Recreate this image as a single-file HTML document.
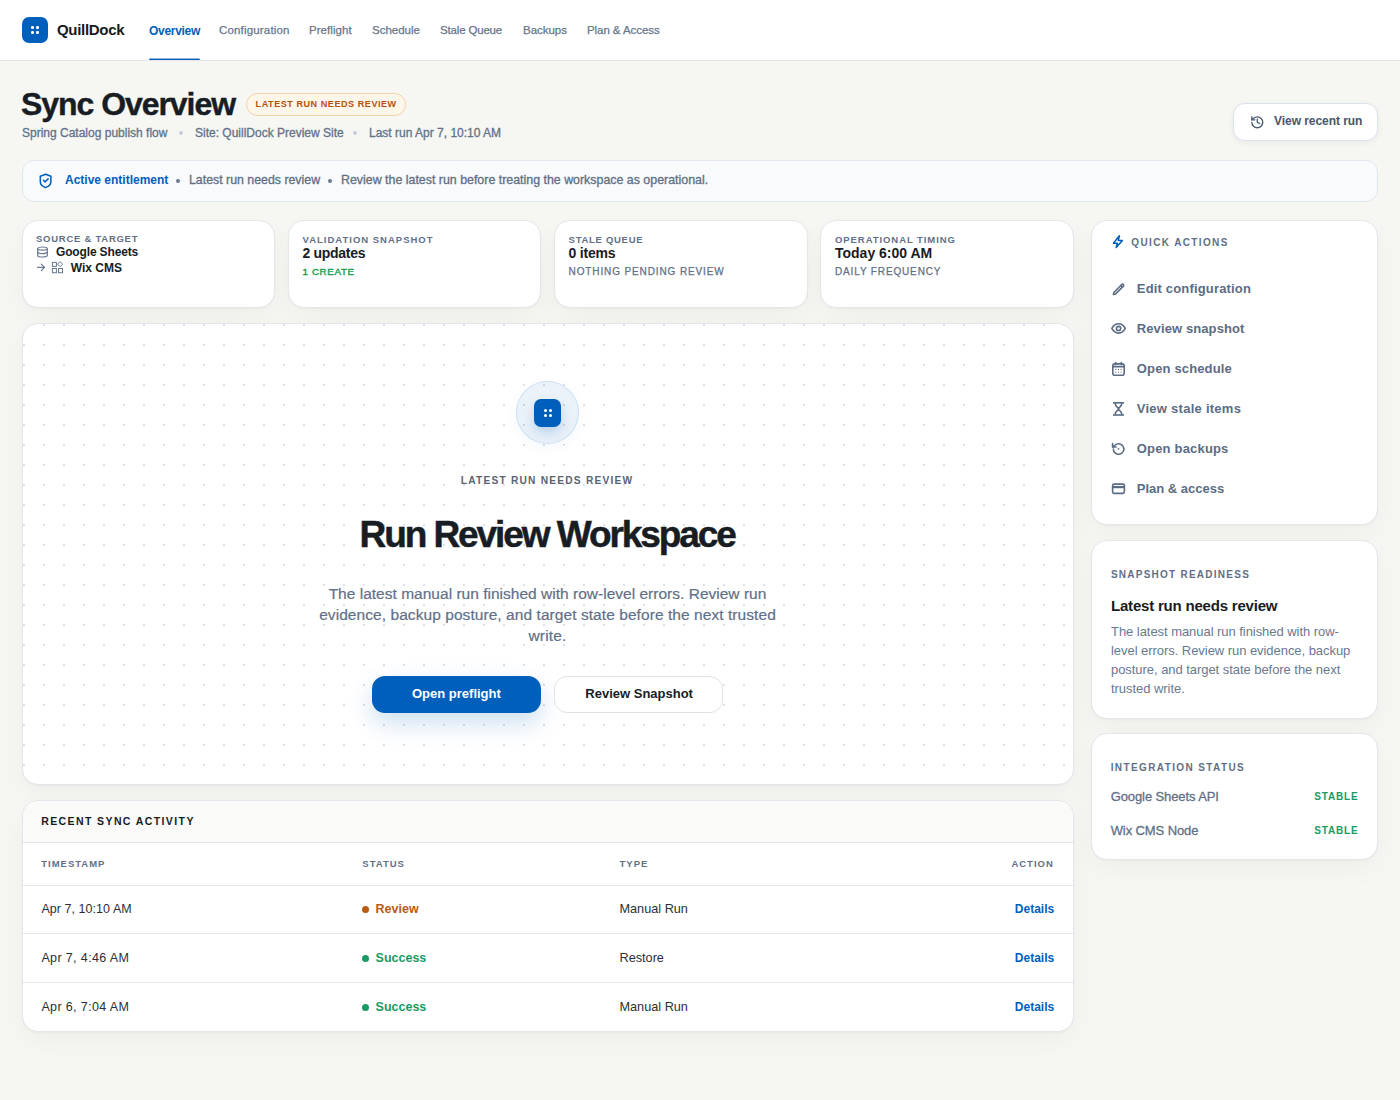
<!DOCTYPE html>
<html><head><meta charset="utf-8">
<style>
*{box-sizing:border-box;margin:0;padding:0}
html,body{width:1400px;height:1100px;overflow:hidden}
body{background:#f6f7f2;font-family:"Liberation Sans",sans-serif;color:#1b1f26;position:relative}
.abs{position:absolute}
.nowrap{white-space:nowrap}
svg{display:block}
/* header */
#hdr{position:absolute;left:0;top:0;width:1400px;height:61px;background:#fff;border-bottom:1px solid #e2e5ea}
#logo{position:absolute;left:22px;top:17px;width:26px;height:26px;border-radius:7px;background:#005fbb}
.dot{position:absolute;width:3px;height:3px;border-radius:1.3px;background:#fff}
#brand{position:absolute;left:57px;top:20.8px;font-size:15px;font-weight:700;letter-spacing:-0.3px;line-height:18px;color:#161a21}
.nav{position:absolute;top:22.7px;font-size:11.5px;line-height:15px;color:#66768c;-webkit-text-stroke:0.25px currentColor;white-space:nowrap}
.nav.act{color:#005fbb;font-weight:700;-webkit-text-stroke:0;letter-spacing:-0.35px}
#uline{position:absolute;left:149px;top:58px;width:51px;height:2px;border-radius:1px;background:linear-gradient(to bottom,rgba(0,95,187,.45) 0,rgba(0,95,187,.45) 50%,#005fbb 50%)}

.card{position:absolute;background:#fff;border:1px solid #e4e6eb;border-radius:16px;box-shadow:0 1px 2px rgba(20,25,35,.035),0 10px 28px rgba(20,25,35,.035)}
.t{position:absolute;white-space:nowrap}
.med{-webkit-text-stroke:0.3px currentColor}
.hero{background-color:#fff;background-image:radial-gradient(circle at 1px 1px,#dfe2e8 1px,transparent 1.2px);background-size:20px 20px;background-position:0 0}
.lbl{font-weight:700;color:#66778f;text-transform:uppercase;white-space:nowrap}
</style></head>
<body>
<div id="hdr">
  <div id="logo">
    <div class="dot" style="left:8.5px;top:8.5px"></div>
    <div class="dot" style="left:14px;top:8.5px"></div>
    <div class="dot" style="left:8.5px;top:14px"></div>
    <div class="dot" style="left:14px;top:14px"></div>
  </div>
  <div id="brand">QuillDock</div>
  <div class="nav act" style="left:149px;font-size:12px;top:23.6px;letter-spacing:-0.3px">Overview</div>
  <div class="nav" style="left:219px;letter-spacing:0.17px">Configuration</div>
  <div class="nav" style="left:309px;letter-spacing:0.05px">Preflight</div>
  <div class="nav" style="left:372px;letter-spacing:0.0px">Schedule</div>
  <div class="nav" style="left:440px;letter-spacing:-0.17px">Stale Queue</div>
  <div class="nav" style="left:523px;letter-spacing:-0.02px">Backups</div>
  <div class="nav" style="left:587px;letter-spacing:-0.07px">Plan &amp; Access</div>
  <div id="uline"></div>
</div>


<!-- page title -->
<div class="abs nowrap" id="title" style="left:21px;top:85px;font-size:32px;line-height:38px;font-weight:700;letter-spacing:-1.05px;color:#181c23;-webkit-text-stroke:0.4px currentColor">Sync Overview</div>
<div class="abs" id="badge" style="left:246px;top:93px;width:160px;height:23px;border-radius:12px;background:#fff6ea;border:1px solid #f1d3a8"></div>
<div class="abs nowrap" style="left:255.6px;top:98.3px;font-size:9.1px;line-height:12px;font-weight:700;letter-spacing:0.52px;color:#b4520c">LATEST RUN NEEDS REVIEW</div>
<div class="abs nowrap med" id="sub" style="left:22px;top:126px;font-size:12px;line-height:14px;color:#62728a">
  <span>Spring Catalog publish flow</span>
</div>
<div class="abs nowrap med" style="left:195px;top:126px;font-size:12px;line-height:14px;color:#62728a">Site: QuillDock Preview Site</div>
<div class="abs nowrap med" style="left:369px;top:126px;font-size:12px;line-height:14px;color:#62728a">Last run Apr 7, 10:10 AM</div>
<div class="abs" style="left:179px;top:131px;width:4px;height:4px;border-radius:2px;background:#c7ced8"></div>
<div class="abs" style="left:352.5px;top:131px;width:4px;height:4px;border-radius:2px;background:#c7ced8"></div>

<!-- view recent run -->
<div class="abs" style="left:1233px;top:103px;width:145px;height:38px;border-radius:12px;background:#fff;border:1px solid #dae2ec;box-shadow:0 2px 6px rgba(30,40,60,.06)"></div>
<svg class="abs" style="left:1249.9px;top:114.5px" width="14.6" height="14.6" viewBox="0 0 24 24" fill="none" stroke="#4a5a70" stroke-width="2.2" stroke-linecap="round" stroke-linejoin="round"><path d="M3 12a9 9 0 1 0 9-9 9.75 9.75 0 0 0-6.74 2.74L3 8"/><path d="M3 3v5h5"/><path d="M12 7v5l4 2"/></svg>
<div class="abs nowrap" style="left:1274px;top:114px;font-size:12px;line-height:14px;font-weight:700;color:#46566c;letter-spacing:-0.05px">View recent run</div>

<!-- banner -->
<div class="abs" style="left:22px;top:160px;width:1356px;height:42px;border-radius:12px;background:#f8fafc;border:1px solid #e1e7ef"></div>
<svg class="abs" style="left:39px;top:173px" width="13" height="16" viewBox="0 0 13 16" fill="none" stroke="#005fbb" stroke-width="1.5" stroke-linecap="round" stroke-linejoin="round"><path d="M6.6 1.2L11.9 3.3V8.5C11.9 11.5 9.5 13.6 6.6 14.5C3.7 13.6 1.3 11.5 1.3 8.5V3.3Z"/><path d="M4.5 7.3L6.1 8.9L9.2 5.8"/></svg>
<div class="abs nowrap" style="left:65px;top:173px;font-size:12px;line-height:14px;font-weight:700;color:#005fbb">Active entitlement</div>
<div class="abs" style="left:176px;top:179px;width:4px;height:4px;border-radius:2px;background:#6b7a8f"></div>
<div class="abs nowrap med" style="left:189px;top:173px;font-size:12.35px;line-height:14px;color:#5f6f85">Latest run needs review</div>
<div class="abs" style="left:328px;top:179px;width:4px;height:4px;border-radius:2px;background:#6b7a8f"></div>
<div class="abs nowrap med" style="left:341px;top:173px;font-size:12.4px;line-height:14px;color:#5f6f85">Review the latest run before treating the workspace as operational.</div>
<div class="card" style="left:22px;top:220px;width:253px;height:88px"></div>
<div class="card" style="left:288px;top:220px;width:253px;height:88px"></div>
<div class="card" style="left:554px;top:220px;width:254px;height:88px"></div>
<div class="card" style="left:820px;top:220px;width:254px;height:88px"></div>
<div class="t" style="left:36px;top:232.91px;font-size:9.5px;line-height:12px;font-weight:700;letter-spacing:0.74px;color:#5f7088;">SOURCE &amp; TARGET</div>
<svg class="abs" style="left:36px;top:246px" width="13" height="12" viewBox="0 0 13 12" fill="none" stroke="#66778f" stroke-width="1.2"><ellipse cx="6.5" cy="2.6" rx="4.8" ry="1.6"/><path d="M1.7 2.6V9.4A4.8 1.6 0 0 0 11.3 9.4V2.6"/><path d="M1.7 6A4.8 1.6 0 0 0 11.3 6"/></svg>
<div class="t" style="left:56px;top:244.94px;font-size:12px;line-height:15px;font-weight:700;letter-spacing:-0.15px;color:#181c23;">Google Sheets</div>
<svg class="abs" style="left:36px;top:262px" width="10" height="11" viewBox="0 0 10 11" fill="none" stroke="#66778f" stroke-width="1.2" stroke-linecap="round" stroke-linejoin="round"><path d="M1.6 5.4H8.5"/><path d="M5.3 2.2L8.5 5.4L5.3 8.6"/></svg>
<svg class="abs" style="left:51px;top:261px" width="13" height="13" viewBox="0 0 13 13" fill="none" stroke="#66778f" stroke-width="1.0"><rect x="1.4" y="1.4" width="4" height="4"/><rect x="1.4" y="7.5" width="4" height="4.2"/><rect x="7.5" y="7.5" width="4" height="4.2"/><path d="M9.1 0.7L11.7 3.2L9.1 5.7L6.6 3.2Z" stroke-linejoin="round"/></svg>
<div class="t" style="left:70.7px;top:260.84px;font-size:12px;line-height:15px;font-weight:700;letter-spacing:0px;color:#181c23;">Wix CMS</div>
<div class="t" style="left:302.5px;top:233.71px;font-size:9.5px;line-height:12px;font-weight:700;letter-spacing:1.0px;color:#5f7088;">VALIDATION SNAPSHOT</div>
<div class="t" style="left:302.5px;top:244.15px;font-size:14px;line-height:18px;font-weight:700;letter-spacing:-0.3px;color:#181c23;">2 updates</div>
<div class="t" style="left:302.5px;top:266.40px;font-size:9.8px;line-height:12px;font-weight:400;letter-spacing:0.62px;color:#1e9e4c;-webkit-text-stroke:0.4px currentColor">1 CREATE</div>
<div class="t" style="left:568.6px;top:233.71px;font-size:9.5px;line-height:12px;font-weight:700;letter-spacing:0.71px;color:#5f7088;">STALE QUEUE</div>
<div class="t" style="left:568.6px;top:244.15px;font-size:14px;line-height:18px;font-weight:700;letter-spacing:-0.2px;color:#181c23;">0 items</div>
<div class="t" style="left:568.6px;top:265.54px;font-size:10px;line-height:12px;font-weight:400;letter-spacing:0.88px;color:#5f7088;-webkit-text-stroke:0.25px currentColor">NOTHING PENDING REVIEW</div>
<div class="t" style="left:835px;top:233.71px;font-size:9.5px;line-height:12px;font-weight:700;letter-spacing:0.93px;color:#5f7088;">OPERATIONAL TIMING</div>
<div class="t" style="left:835px;top:244.15px;font-size:14px;line-height:18px;font-weight:700;letter-spacing:0px;color:#181c23;">Today 6:00 AM</div>
<div class="t" style="left:835px;top:265.54px;font-size:10px;line-height:12px;font-weight:400;letter-spacing:0.85px;color:#5f7088;-webkit-text-stroke:0.25px currentColor">DAILY FREQUENCY</div>
<div class="card hero" style="left:22px;top:323px;width:1052px;height:462px"></div>
<div class="abs" style="left:516px;top:381px;width:63px;height:63px;border-radius:50%;background:radial-gradient(circle at 50% 40%,rgba(0,95,187,.06) 0%,rgba(0,95,187,.10) 100%);border:1px solid rgba(0,95,187,.12);box-shadow:0 4px 12px rgba(0,95,187,.05)"></div>
<div class="abs" style="left:534px;top:399px;width:27px;height:28px;border-radius:7px;background:#005fbb;box-shadow:0 5px 12px rgba(0,95,187,.22)">
<div class="dot" style="left:9.5px;top:9.5px;border-radius:1.5px"></div><div class="dot" style="left:15px;top:9.5px;border-radius:1.5px"></div><div class="dot" style="left:9.5px;top:15px;border-radius:1.5px"></div><div class="dot" style="left:15px;top:15px;border-radius:1.5px"></div></div>
<div class="t" style="left:460.8px;top:473.77px;font-size:10.2px;line-height:13px;font-weight:700;letter-spacing:1.21px;color:#5a6474;">LATEST RUN NEEDS REVIEW</div>
<div class="t" style="left:359.6px;top:513.08px;font-size:37px;line-height:44px;font-weight:700;letter-spacing:-2.08px;color:#181c23;-webkit-text-stroke:0.5px currentColor">Run Review Workspace</div>
<div class="abs" style="left:312.5px;top:582.5px;width:470px;text-align:center;font-size:15.5px;line-height:21px;color:#607089;white-space:nowrap;-webkit-text-stroke:0.2px currentColor"><span style="letter-spacing:0.015px">The latest manual run finished with row-level errors. Review run</span><br><span style="letter-spacing:0.065px">evidence, backup posture, and target state before the next trusted</span><br><span style="letter-spacing:0.2px">write.</span></div>
<div class="abs" style="left:372px;top:676px;width:169px;height:37px;border-radius:13px;background:#005fbb;box-shadow:0 10px 24px rgba(0,95,187,.20)"></div>
<div class="t" style="left:412px;top:685.60px;font-size:13px;line-height:16px;font-weight:700;letter-spacing:0px;color:#ffffff;">Open preflight</div>
<div class="abs" style="left:554px;top:676px;width:169px;height:37px;border-radius:13px;background:#fff;border:1px solid #dfe3e8"></div>
<div class="t" style="left:585.3px;top:685.60px;font-size:13px;line-height:16px;font-weight:700;letter-spacing:0px;color:#181c23;">Review Snapshot</div>
<div class="card" style="left:22px;top:800px;width:1052px;height:232px;overflow:hidden"><div style="position:absolute;left:0;top:0;right:0;height:42px;background:#fafaf8;border-bottom:1px solid #e4e6eb"></div><div style="position:absolute;left:0;top:84px;right:0;height:1px;background:#e4e6eb"></div><div style="position:absolute;left:0;top:132px;right:0;height:1px;background:#e4e6eb"></div><div style="position:absolute;left:0;top:181px;right:0;height:1px;background:#e4e6eb"></div></div>
<div class="t" style="left:41.2px;top:814.96px;font-size:10.5px;line-height:13px;font-weight:700;letter-spacing:1.4px;color:#181c23;">RECENT SYNC ACTIVITY</div>
<div class="t" style="left:41.2px;top:857.81px;font-size:9.5px;line-height:12px;font-weight:700;letter-spacing:1.0px;color:#5f7088;">TIMESTAMP</div>
<div class="t" style="left:362.3px;top:857.81px;font-size:9.5px;line-height:12px;font-weight:700;letter-spacing:1.0px;color:#5f7088;">STATUS</div>
<div class="t" style="left:619.5px;top:857.81px;font-size:9.5px;line-height:12px;font-weight:700;letter-spacing:1.0px;color:#5f7088;">TYPE</div>
<div class="t" style="left:1011.4px;top:857.81px;font-size:9.5px;line-height:12px;font-weight:700;letter-spacing:1.0px;color:#5f7088;">ACTION</div>
<div class="t" style="left:41.4px;top:901.27px;font-size:12.5px;line-height:16px;font-weight:400;letter-spacing:0.05px;color:#2a2f37;">Apr 7, 10:10 AM</div>
<div class="abs" style="left:362px;top:906.1px;width:7px;height:7px;border-radius:50%;background:#b85b14"></div>
<div class="t" style="left:375.6px;top:901.27px;font-size:12.5px;line-height:16px;font-weight:700;letter-spacing:0px;color:#b85b14;">Review</div>
<div class="t" style="left:619.5px;top:901.20px;font-size:12.7px;line-height:16px;font-weight:400;letter-spacing:0px;color:#2a2f37;">Manual Run</div>
<div class="t" style="left:1014.8px;top:901.94px;font-size:12px;line-height:15px;font-weight:700;letter-spacing:0px;color:#005fbb;">Details</div>
<div class="t" style="left:41.4px;top:949.97px;font-size:12.5px;line-height:16px;font-weight:400;letter-spacing:0.37px;color:#2a2f37;">Apr 7, 4:46 AM</div>
<div class="abs" style="left:362px;top:954.8px;width:7px;height:7px;border-radius:50%;background:#179b62"></div>
<div class="t" style="left:375.6px;top:949.97px;font-size:12.5px;line-height:16px;font-weight:700;letter-spacing:0px;color:#179b62;">Success</div>
<div class="t" style="left:619.5px;top:949.90px;font-size:12.7px;line-height:16px;font-weight:400;letter-spacing:0px;color:#2a2f37;">Restore</div>
<div class="t" style="left:1014.8px;top:950.64px;font-size:12px;line-height:15px;font-weight:700;letter-spacing:0px;color:#005fbb;">Details</div>
<div class="t" style="left:41.4px;top:998.97px;font-size:12.5px;line-height:16px;font-weight:400;letter-spacing:0.37px;color:#2a2f37;">Apr 6, 7:04 AM</div>
<div class="abs" style="left:362px;top:1003.8px;width:7px;height:7px;border-radius:50%;background:#179b62"></div>
<div class="t" style="left:375.6px;top:998.97px;font-size:12.5px;line-height:16px;font-weight:700;letter-spacing:0px;color:#179b62;">Success</div>
<div class="t" style="left:619.5px;top:998.90px;font-size:12.7px;line-height:16px;font-weight:400;letter-spacing:0px;color:#2a2f37;">Manual Run</div>
<div class="t" style="left:1014.8px;top:999.64px;font-size:12px;line-height:15px;font-weight:700;letter-spacing:0px;color:#005fbb;">Details</div>
<div class="card" style="left:1091px;top:220px;width:287px;height:305px"></div>
<svg class="abs" style="left:1112px;top:234px" width="12" height="15" viewBox="1112 234 12 15" fill="none" stroke="#005fbb" stroke-width="1.5" stroke-linejoin="round"><path d="M1119.4 235.8L1118.3 240.4H1122.4L1116.2 247.4L1117.3 243.2H1113.4Z"/></svg>
<div class="t" style="left:1131.3px;top:236.53px;font-size:10px;line-height:12px;font-weight:700;letter-spacing:1.37px;color:#5f7088;">QUICK ACTIONS</div>
<svg class="abs" style="left:1111px;top:283px" width="15" height="15" viewBox="0 0 15 15" fill="none" stroke="#5b6c84" stroke-width="1.6" stroke-linecap="round" stroke-linejoin="round"><path d="M2.39 11.51L2.99 9.29L10.79 1.49A1.15 1.15 0 0 1 12.41 3.11L4.61 10.91Z"/><path d="M9.73 2.55L11.35 4.17"/></svg>
<div class="t" style="left:1136.8px;top:281.00px;font-size:13px;line-height:16px;font-weight:700;letter-spacing:0.17px;color:#5b6c84;">Edit configuration</div>
<svg class="abs" style="left:1110px;top:322px" width="17" height="13" viewBox="0 0 17 13" fill="none" stroke="#5b6c84" stroke-width="1.6" stroke-linecap="round" stroke-linejoin="round"><path d="M1.8 6.45C3.6 3.2 5.9 1.8 8.55 1.8C11.2 1.8 13.5 3.2 15.3 6.45C13.5 9.7 11.2 11.1 8.55 11.1C5.9 11.1 3.6 9.7 1.8 6.45Z"/><circle cx="8.55" cy="6.45" r="2.1"/></svg>
<div class="t" style="left:1136.8px;top:320.90px;font-size:13px;line-height:16px;font-weight:700;letter-spacing:0.1px;color:#5b6c84;">Review snapshot</div>
<svg class="abs" style="left:1111px;top:361px" width="15" height="16" viewBox="0 0 15 16" fill="none" stroke="#5b6c84" stroke-width="1.6" stroke-linecap="round" stroke-linejoin="round"><rect x="1.8" y="2.9" width="11.4" height="11.3" rx="2"/><path d="M4.7 1.6V3.6M10.3 1.6V3.6"/><path d="M1.8 5.6H13.2"/><g fill="#5b6c84" stroke="none"><circle cx="4.9" cy="8.4" r=".65"/><circle cx="7.5" cy="8.4" r=".65"/><circle cx="10.1" cy="8.4" r=".65"/><circle cx="4.9" cy="11.1" r=".65"/><circle cx="7.5" cy="11.1" r=".65"/><circle cx="10.1" cy="11.1" r=".65"/></g></svg>
<div class="t" style="left:1136.8px;top:360.80px;font-size:13px;line-height:16px;font-weight:700;letter-spacing:0.15px;color:#5b6c84;">Open schedule</div>
<svg class="abs" style="left:1112px;top:401px" width="13" height="16" viewBox="0 0 13 16" fill="none" stroke="#5b6c84" stroke-width="1.6" stroke-linecap="round" stroke-linejoin="round"><g fill="#5b6c84" stroke="none"><rect x="1" y="1" width="11" height="1.6"/><rect x="1" y="13.2" width="11" height="1.6"/></g><path d="M3.2 2.6C3.2 5.8 6.5 6.2 6.5 7.9C6.5 6.2 9.8 5.8 9.8 2.6"/><path d="M3.2 13.2C3.2 10 6.5 9.6 6.5 7.9C6.5 9.6 9.8 10 9.8 13.2"/></svg>
<div class="t" style="left:1136.8px;top:400.70px;font-size:13px;line-height:16px;font-weight:700;letter-spacing:0.26px;color:#5b6c84;">View stale items</div>
<svg class="abs" style="left:1111px;top:442px" width="15" height="15" viewBox="0 0 15 15" fill="none" stroke="#5b6c84" stroke-width="1.6" stroke-linecap="round" stroke-linejoin="round"><path d="M2.35 7.0A5.25 5.25 0 1 0 3.89 3.29L1.6 5.0"/><path d="M1.6 1.5V5.0H5.1"/><circle cx="7.5" cy="6.8" r="0.9" fill="#5b6c84" stroke="none"/></svg>
<div class="t" style="left:1136.8px;top:440.70px;font-size:13px;line-height:16px;font-weight:700;letter-spacing:0.18px;color:#5b6c84;">Open backups</div>
<svg class="abs" style="left:1111px;top:483px" width="15" height="12" viewBox="0 0 15 12" fill="none" stroke="#5b6c84" stroke-width="1.6" stroke-linecap="round" stroke-linejoin="round"><rect x="1.6" y="1.1" width="11.8" height="9.3" rx="1.6"/><rect x="1.6" y="3.0" width="11.8" height="2.2" fill="#5b6c84" stroke="none"/></svg>
<div class="t" style="left:1136.8px;top:480.70px;font-size:13px;line-height:16px;font-weight:700;letter-spacing:0.0px;color:#5b6c84;">Plan &amp; access</div>
<div class="card" style="left:1091px;top:540px;width:287px;height:179px"></div>
<div class="t" style="left:1110.9px;top:568.74px;font-size:10px;line-height:12px;font-weight:700;letter-spacing:1.25px;color:#5f7088;">SNAPSHOT READINESS</div>
<div class="t" style="left:1111px;top:595.90px;font-size:15px;line-height:19px;font-weight:700;letter-spacing:-0.2px;color:#181c23;">Latest run needs review</div>
<div class="abs" style="left:1111px;top:622px;width:248px;font-size:13px;line-height:19px;letter-spacing:-0.05px;color:#687990">The latest manual run finished with row-level errors. Review run evidence, backup posture, and target state before the next trusted write.</div>
<div class="card" style="left:1091px;top:733px;width:287px;height:127px"></div>
<div class="t" style="left:1110.7px;top:761.63px;font-size:10px;line-height:12px;font-weight:700;letter-spacing:1.39px;color:#5f7088;">INTEGRATION STATUS</div>
<div class="t" style="left:1110.7px;top:788.60px;font-size:13px;line-height:16px;font-weight:400;letter-spacing:-0.1px;color:#5f7088;-webkit-text-stroke:0.3px currentColor">Google Sheets API</div>
<div class="t" style="left:1314.3px;top:790.93px;font-size:10px;line-height:12px;font-weight:700;letter-spacing:0.8px;color:#179b62;">STABLE</div>
<div class="t" style="left:1110.7px;top:823.30px;font-size:13px;line-height:16px;font-weight:400;letter-spacing:-0.1px;color:#5f7088;-webkit-text-stroke:0.3px currentColor">Wix CMS Node</div>
<div class="t" style="left:1314.3px;top:825.43px;font-size:10px;line-height:12px;font-weight:700;letter-spacing:0.8px;color:#179b62;">STABLE</div>

</body></html>
